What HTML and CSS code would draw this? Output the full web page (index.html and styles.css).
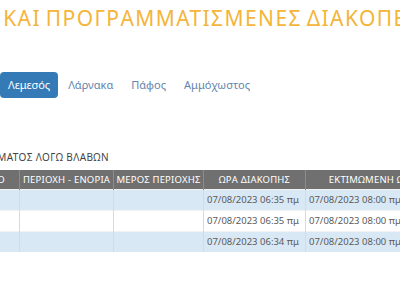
FILE: index.html
```html
<!DOCTYPE html>
<html lang="el">
<head>
    <meta charset="UTF-8">
    <meta name="viewport" content="width=device-width, initial-scale=1.0">
    <title>Διακοπές Ρεύματος</title>
    <link rel="stylesheet" href="styles.css">
</head>
<body>
    <div class="page">
        <h1 class="page-title">ΜΗ ΠΡΟΓΡΑΜΜΑΤΙΣΜΕΝΕΣ ΚΑΙ ΠΡΟΓΡΑΜΜΑΤΙΣΜΕΝΕΣ ΔΙΑΚΟΠΕΣ</h1>

        <ul class="tabs">
            <li><a href="#" class="active">Λεμεσός</a></li>
            <li><a href="#">Λάρνακα</a></li>
            <li><a href="#">Πάφος</a></li>
            <li><a href="#">Αμμόχωστος</a></li>
        </ul>

        <div class="outages">
            <h2 class="section-title">ΔΙΑΚΟΠΕΣ ΡΕΥΜΑΤΟΣ ΛΟΓΩ ΒΛΑΒΩΝ</h2>
            <table class="outage-table">
                <colgroup>
                    <col class="col-village">
                    <col class="col-area">
                    <col class="col-part">
                    <col class="col-time">
                    <col class="col-est">
                </colgroup>
                <thead>
                    <tr>
                        <th>ΧΩΡΙΟ</th>
                        <th>ΠΕΡΙΟΧΗ - ΕΝΟΡΙΑ</th>
                        <th>ΜΕΡΟΣ ΠΕΡΙΟΧΗΣ</th>
                        <th>ΩΡΑ ΔΙΑΚΟΠΗΣ</th>
                        <th>ΕΚΤΙΜΩΜΕΝΗ ΩΡΑ ΑΠΟΚΑΤΑΣΤΑΣΗΣ</th>
                    </tr>
                </thead>
                <tbody>
                    <tr>
                        <td></td><td></td><td></td>
                        <td>07/08/2023 06:35 πμ</td>
                        <td>07/08/2023 08:00 πμ</td>
                    </tr>
                    <tr>
                        <td></td><td></td><td></td>
                        <td>07/08/2023 06:35 πμ</td>
                        <td>07/08/2023 08:00 πμ</td>
                    </tr>
                    <tr>
                        <td></td><td></td><td></td>
                        <td>07/08/2023 06:34 πμ</td>
                        <td>07/08/2023 08:00 πμ</td>
                    </tr>
                </tbody>
            </table>
        </div>
    </div>
</body>
</html>
```

FILE: styles.css
```css
:root {
    --title-color: #f4b53a;
    --primary-color: #337ab7;
    --link-color: #6485ad;
    --text-color: #555555;
    --head-color: #707070;
    --row-alt: #d9e8f5;
}

* {
    margin: 0;
    padding: 0;
    box-sizing: border-box;
}

html, body {
    overflow: hidden;
}

body {
    background-color: white;
    font-family: 'Noto Sans', 'DejaVu Sans', sans-serif;
    color: var(--text-color);
}

.page {
    width: 400px;
}

.page-title {
    margin-left: -300px;
    padding-top: 6px;
    white-space: nowrap;
    font-size: 21px;
    font-weight: normal;
    line-height: 25px;
    letter-spacing: 1.4px;
    word-spacing: -2px;
    color: var(--title-color);
}

.tabs {
    list-style: none;
    display: flex;
    gap: 2px;
    margin-top: 41px;
}

.tabs a {
    display: block;
    padding: 0 8px;
    height: 26px;
    line-height: 26px;
    font-size: 11px;
    text-decoration: none;
    color: var(--link-color);
    border-radius: 4px;
}

.tabs a.active {
    background-color: var(--primary-color);
    color: white;
    padding: 0 8px;
}

.outages {
    margin-left: -40px;
    margin-top: 52px;
}

.section-title {
    margin-left: -36px;
    font-size: 10px;
    font-weight: normal;
    line-height: 14px;
    letter-spacing: 0.4px;
    color: #444;
    white-space: nowrap;
    margin-bottom: 6px;
}

.outage-table {
    table-layout: fixed;
    border-collapse: collapse;
    width: 560px;
    font-size: 9.5px;
}

.col-village { width: 59px; }
.col-area { width: 94px; }
.col-part { width: 90px; }
.col-time { width: 102px; }
.col-est { width: 215px; }

.outage-table th {
    background-color: var(--head-color);
    color: white;
    font-weight: normal;
    font-size: 9.5px;
    letter-spacing: 0.2px;
    height: 19px;
    padding: 0 2px;
    white-space: nowrap;
    overflow: hidden;
    text-align: center;
    border-left: 1px solid #8c8c8c;
}

.outage-table td {
    height: 21px;
    padding: 0 3px;
    white-space: nowrap;
    overflow: hidden;
    color: #5a5a5a;
    border-left: 1px solid #dadada;
    border-top: 1px solid #f2f2f2;
}

.outage-table tbody tr:nth-child(odd) td {
    background-color: var(--row-alt);
}
```
